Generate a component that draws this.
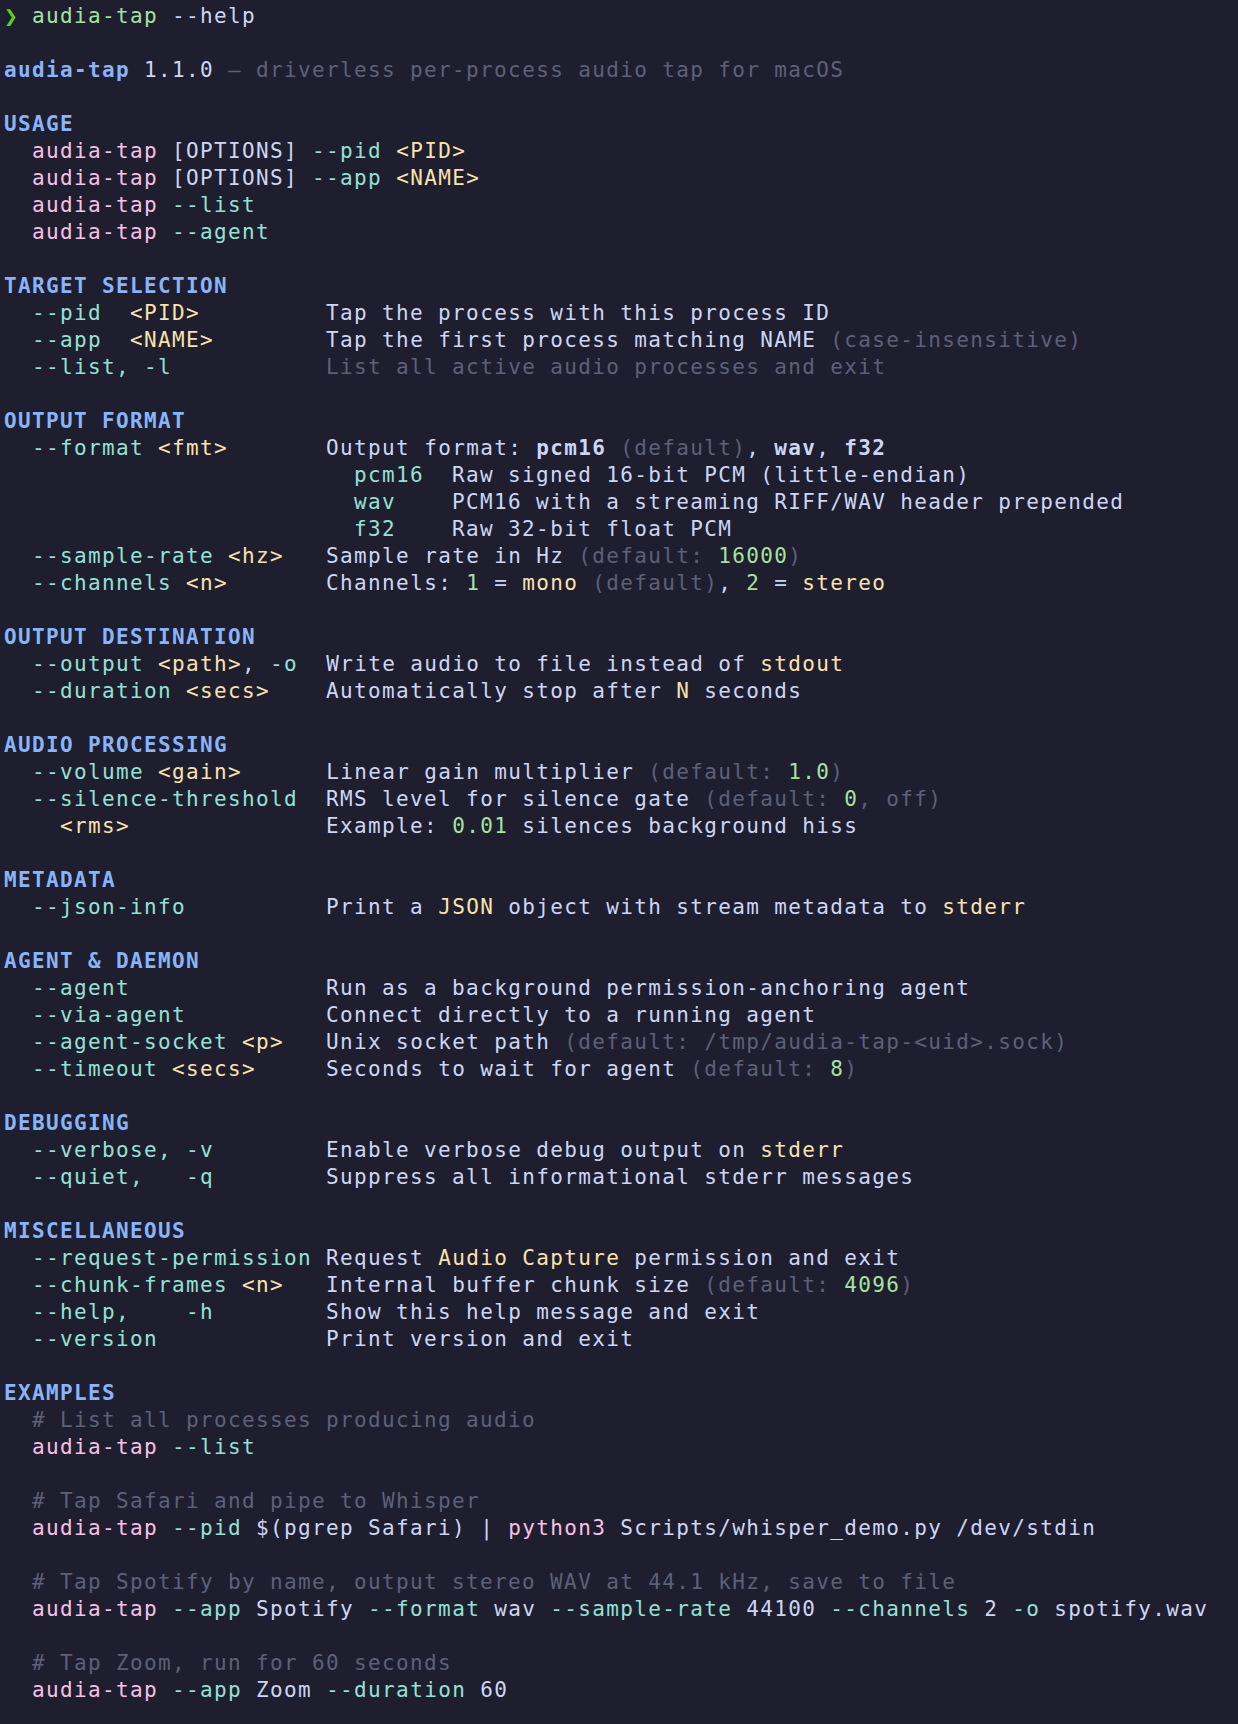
const C = {
  t: "text-[#cdd6f4]",
  b: "font-bold text-[#89b4fa]",
  c: "text-[#94e2d5]",
  y: "text-[#f9e2af]",
  g: "text-[#a6e3a1]",
  p: "text-[#f5c2e7]",
  d: "text-[#5d6178]",
  w: "font-bold text-[#cdd6f4]",
  G: "inline-block w-[13.9px] align-top text-[23px] font-bold tracking-normal text-[#5fcf1f]",
};

type Seg = [keyof typeof C, string];
type Line = Seg[];

// flag column is 21 wide after the 2-space indent, descriptions start at col 23
function opt(flag: Seg[], desc: Seg[]): Line {
  const len = flag.reduce((n, s) => n + s[1].length, 0);
  return [["t", "  "], ...flag, ["t", " ".repeat(Math.max(1, 21 - len))], ...desc];
}

function sub(name: string, gap: string, desc: string): Line {
  return [["t", " ".repeat(25)], ["c", name], ["t", gap + desc]];
}

const head = (s: string): Line => [["b", s]];
const blank: Line = [];
const def = (v: string, rest = ")"): Seg[] => [["d", "(default: "], ["g", v], ["d", rest]];

const lines: Line[] = [
  [["G", "❯"], ["t", " "], ["g", "audia-tap"], ["t", " --help"]],
  blank,
  [["b", "audia-tap"], ["t", " 1.1.0 "], ["d", "— driverless per-process audio tap for macOS"]],
  blank,
  head("USAGE"),
  [["t", "  "], ["p", "audia-tap"], ["t", " [OPTIONS] "], ["c", "--pid"], ["t", " "], ["y", "<PID>"]],
  [["t", "  "], ["p", "audia-tap"], ["t", " [OPTIONS] "], ["c", "--app"], ["t", " "], ["y", "<NAME>"]],
  [["t", "  "], ["p", "audia-tap"], ["t", " "], ["c", "--list"]],
  [["t", "  "], ["p", "audia-tap"], ["t", " "], ["c", "--agent"]],
  blank,
  head("TARGET SELECTION"),
  opt([["c", "--pid"], ["t", "  "], ["y", "<PID>"]], [["t", "Tap the process with this process ID"]]),
  opt(
    [["c", "--app"], ["t", "  "], ["y", "<NAME>"]],
    [["t", "Tap the first process matching NAME "], ["d", "(case-insensitive)"]]
  ),
  opt([["c", "--list, -l"]], [["d", "List all active audio processes and exit"]]),
  blank,
  head("OUTPUT FORMAT"),
  opt(
    [["c", "--format"], ["t", " "], ["y", "<fmt>"]],
    [
      ["t", "Output format: "],
      ["w", "pcm16"],
      ["t", " "],
      ["d", "(default)"],
      ["t", ", "],
      ["w", "wav"],
      ["t", ", "],
      ["w", "f32"],
    ]
  ),
  sub("pcm16", "  ", "Raw signed 16-bit PCM (little-endian)"),
  sub("wav", "    ", "PCM16 with a streaming RIFF/WAV header prepended"),
  sub("f32", "    ", "Raw 32-bit float PCM"),
  opt([["c", "--sample-rate"], ["t", " "], ["y", "<hz>"]], [["t", "Sample rate in Hz "], ...def("16000")]),
  opt(
    [["c", "--channels"], ["t", " "], ["y", "<n>"]],
    [
      ["t", "Channels: "],
      ["g", "1"],
      ["t", " = "],
      ["y", "mono"],
      ["t", " "],
      ["d", "(default)"],
      ["t", ", "],
      ["g", "2"],
      ["t", " = "],
      ["y", "stereo"],
    ]
  ),
  blank,
  head("OUTPUT DESTINATION"),
  opt(
    [["c", "--output"], ["t", " "], ["y", "<path>"], ["t", ", "], ["c", "-o"]],
    [["t", "Write audio to file instead of "], ["y", "stdout"]]
  ),
  opt(
    [["c", "--duration"], ["t", " "], ["y", "<secs>"]],
    [["t", "Automatically stop after "], ["y", "N"], ["t", " seconds"]]
  ),
  blank,
  head("AUDIO PROCESSING"),
  opt([["c", "--volume"], ["t", " "], ["y", "<gain>"]], [["t", "Linear gain multiplier "], ...def("1.0")]),
  opt([["c", "--silence-threshold"]], [["t", "RMS level for silence gate "], ...def("0", ", off)")]),
  opt([["t", "  "], ["y", "<rms>"]], [["t", "Example: "], ["g", "0.01"], ["t", " silences background hiss"]]),
  blank,
  head("METADATA"),
  opt(
    [["c", "--json-info"]],
    [["t", "Print a "], ["y", "JSON"], ["t", " object with stream metadata to "], ["y", "stderr"]]
  ),
  blank,
  head("AGENT & DAEMON"),
  opt([["c", "--agent"]], [["t", "Run as a background permission-anchoring agent"]]),
  opt([["c", "--via-agent"]], [["t", "Connect directly to a running agent"]]),
  opt(
    [["c", "--agent-socket"], ["t", " "], ["y", "<p>"]],
    [["t", "Unix socket path "], ["d", "(default: /tmp/audia-tap-<uid>.sock)"]]
  ),
  opt([["c", "--timeout"], ["t", " "], ["y", "<secs>"]], [["t", "Seconds to wait for agent "], ...def("8")]),
  blank,
  head("DEBUGGING"),
  opt([["c", "--verbose, -v"]], [["t", "Enable verbose debug output on "], ["y", "stderr"]]),
  opt([["c", "--quiet,   -q"]], [["t", "Suppress all informational stderr messages"]]),
  blank,
  head("MISCELLANEOUS"),
  opt(
    [["c", "--request-permission"]],
    [["t", "Request "], ["y", "Audio Capture"], ["t", " permission and exit"]]
  ),
  opt([["c", "--chunk-frames"], ["t", " "], ["y", "<n>"]], [["t", "Internal buffer chunk size "], ...def("4096")]),
  opt([["c", "--help,    -h"]], [["t", "Show this help message and exit"]]),
  opt([["c", "--version"]], [["t", "Print version and exit"]]),
  blank,
  head("EXAMPLES"),
  [["d", "  # List all processes producing audio"]],
  [["t", "  "], ["p", "audia-tap"], ["t", " "], ["c", "--list"]],
  blank,
  [["d", "  # Tap Safari and pipe to Whisper"]],
  [
    ["t", "  "],
    ["p", "audia-tap"],
    ["t", " "],
    ["c", "--pid"],
    ["t", " $(pgrep Safari) | "],
    ["p", "python3"],
    ["t", " Scripts/whisper_demo.py /dev/stdin"],
  ],
  blank,
  [["d", "  # Tap Spotify by name, output stereo WAV at 44.1 kHz, save to file"]],
  [
    ["t", "  "],
    ["p", "audia-tap"],
    ["t", " "],
    ["c", "--app"],
    ["t", " Spotify "],
    ["c", "--format"],
    ["t", " wav "],
    ["c", "--sample-rate"],
    ["t", " 44100 "],
    ["c", "--channels"],
    ["t", " 2 "],
    ["c", "-o"],
    ["t", " spotify.wav"],
  ],
  blank,
  [["d", "  # Tap Zoom, run for 60 seconds"]],
  [["t", "  "], ["p", "audia-tap"], ["t", " "], ["c", "--app"], ["t", " Zoom "], ["c", "--duration"], ["t", " 60"]],
];

export default function App() {
  return (
    <div className="h-[1724px] w-full overflow-hidden bg-[#1e1e2e] pl-[4px] pt-[3px] font-['DejaVu_Sans_Mono',monospace] text-[21px] tracking-[1.36px] text-[#cdd6f4]">
      {lines.map((line, i) => (
        <div key={i} className="h-[27px] whitespace-pre leading-[27px]">
          {line.map((seg, j) => (
            <span key={j} className={C[seg[0]]}>
              {seg[1]}
            </span>
          ))}
        </div>
      ))}
    </div>
  );
}
